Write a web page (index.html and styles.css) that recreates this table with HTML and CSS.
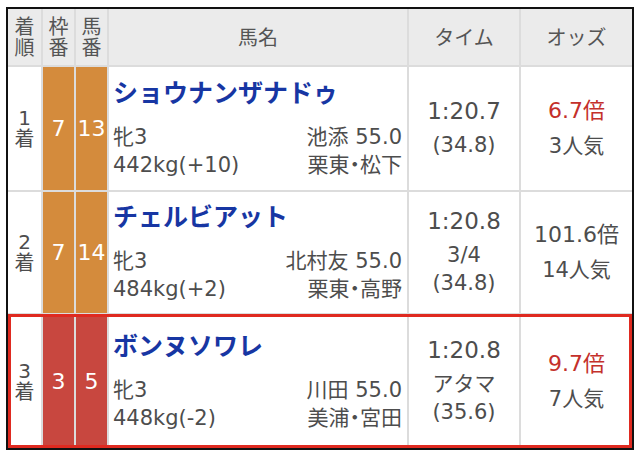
FILE: index.html
```html
<!DOCTYPE html>
<html lang="ja">
<head>
<meta charset="utf-8">
<link rel="stylesheet" href="styles.css">
</head>
<body>
<div class="results">
  <div class="row head">
    <div class="c stack">着<br>順</div>
    <div class="c stack">枠<br>番</div>
    <div class="c stack">馬<br>番</div>
    <div class="c">馬名</div>
    <div class="c">タイム</div>
    <div class="c">オッズ</div>
  </div>

  <div class="row r1">
    <div class="c rank">1<br>着</div>
    <div class="c num orange">7</div>
    <div class="c num orange">13</div>
    <div class="c horse">
      <div class="horse-name">ショウナンザナドゥ</div>
      <div class="line"><span>牝3</span><span class="jp">池添 55.0</span></div>
      <div class="line"><span>442kg(+10)</span><span class="jp">栗東・松下</span></div>
    </div>
    <div class="c time">
      <div class="t-main">1:20.7</div>
      <div class="t-sub">(34.8)</div>
    </div>
    <div class="c odds">
      <div class="o-main red">6.7倍</div>
      <div class="o-sub">3人気</div>
    </div>
  </div>

  <div class="row r2">
    <div class="c rank">2<br>着</div>
    <div class="c num orange">7</div>
    <div class="c num orange">14</div>
    <div class="c horse">
      <div class="horse-name">チェルビアット</div>
      <div class="line"><span>牝3</span><span class="jp">北村友 55.0</span></div>
      <div class="line"><span>484kg(+2)</span><span class="jp">栗東・高野</span></div>
    </div>
    <div class="c time">
      <div class="t-main">1:20.8</div>
      <div class="t-sub">3/4</div>
      <div class="t-sub">(34.8)</div>
    </div>
    <div class="c odds">
      <div class="o-main">101.6倍</div>
      <div class="o-sub">14人気</div>
    </div>
  </div>

  <div class="row r3 picked">
    <div class="c rank">3<br>着</div>
    <div class="c num crimson">3</div>
    <div class="c num crimson">5</div>
    <div class="c horse">
      <div class="horse-name">ボンヌソワレ</div>
      <div class="line"><span>牝3</span><span class="jp">川田 55.0</span></div>
      <div class="line"><span>448kg(-2)</span><span class="jp">美浦・宮田</span></div>
    </div>
    <div class="c time">
      <div class="t-main">1:20.8</div>
      <div class="t-sub">アタマ</div>
      <div class="t-sub">(35.6)</div>
    </div>
    <div class="c odds">
      <div class="o-main red">9.7倍</div>
      <div class="o-sub">7人気</div>
    </div>
  </div>
</div>
</body>
</html>
```

FILE: styles.css
```css
html, body {
  margin: 0;
  padding: 0;
  background: #ffffff;
}

body {
  padding: 7px 6px;
  font-family: "DejaVu Sans", "Noto Sans CJK JP", sans-serif;
  color: #4d4d4d;
}

.results {
  width: 628px;
  box-sizing: border-box;
  border: 2px solid #111111;
  background: #dcdcdc;
  display: flex;
  flex-direction: column;
  gap: 2px;
}

.row {
  display: grid;
  grid-template-columns: 33px 31px 31px 298px 110px 111px;
  gap: 2px;
}

.head { height: 56px; }
.r1 { height: 123px; }
.r2 { height: 121px; }
.r3 { height: 133px; }

.c {
  background: #ffffff;
  display: flex;
  flex-direction: column;
  align-items: center;
  justify-content: center;
  text-align: center;
  min-width: 0;
  box-sizing: border-box;
}

.head .c {
  background: #ebebeb;
  font-family: "Noto Sans CJK JP", sans-serif;
  font-size: 20px;
  line-height: 24px;
  color: #555555;
}

.head .stack {
  line-height: 21px;
  padding-bottom: 3px;
}

.rank {
  font-size: 20px;
  line-height: 21px;
}

.num {
  color: #ffffff;
  font-size: 22px;
}

.orange { background: #d48b3c; }
.crimson { background: #c8473f; }

.horse {
  align-items: stretch;
  text-align: left;
  padding: 0 5px 4px 4px;
}

.horse-name {
  font-family: "Noto Sans CJK JP", sans-serif;
  font-weight: 700;
  font-size: 25px;
  line-height: 34px;
  color: #1736a3;
  margin-bottom: 15px;
  white-space: nowrap;
}

.line {
  display: flex;
  justify-content: space-between;
  font-size: 21px;
  line-height: 28px;
  white-space: nowrap;
}

.jp {
  font-feature-settings: "palt";
}

.time {
  padding-bottom: 4px;
}

.t-main {
  font-size: 23px;
  line-height: 32px;
  margin-bottom: 4px;
}

.t-sub {
  font-size: 21px;
  line-height: 28px;
}

.odds {
  padding-bottom: 3px;
}

.o-main {
  font-size: 22px;
  line-height: 32px;
  margin-bottom: 5px;
}

.o-sub {
  font-size: 21px;
  line-height: 28px;
}

.red { color: #c4302b; }

.picked {
  position: relative;
}

.picked::after {
  content: "";
  position: absolute;
  inset: -1px 0 0 0;
  border: 3px solid #df2a20;
  pointer-events: none;
}
```
